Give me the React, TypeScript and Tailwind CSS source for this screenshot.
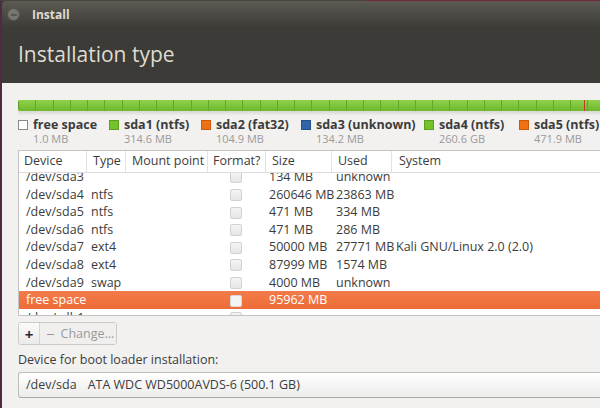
import React from "react";

const FONT = { fontFamily: '"Open Sans", "Noto Sans", sans-serif' };

type Row = { dev: string; type: string; size: string; used: string; sys: string; sel?: boolean };

const rows: Row[] = [
  { dev: "/dev/sda3", type: "", size: "134 MB", used: "unknown", sys: "" },
  { dev: "/dev/sda4", type: "ntfs", size: "260646 MB", used: "23863 MB", sys: "" },
  { dev: "/dev/sda5", type: "ntfs", size: "471 MB", used: "334 MB", sys: "" },
  { dev: "/dev/sda6", type: "ntfs", size: "471 MB", used: "286 MB", sys: "" },
  { dev: "/dev/sda7", type: "ext4", size: "50000 MB", used: "27771 MB", sys: "Kali GNU/Linux 2.0 (2.0)" },
  { dev: "/dev/sda8", type: "ext4", size: "87999 MB", used: "1574 MB", sys: "" },
  { dev: "/dev/sda9", type: "swap", size: "4000 MB", used: "unknown", sys: "" },
  { dev: "free space", type: "", size: "95962 MB", used: "", sys: "", sel: true },
  { dev: "/dev/sdb1", type: "", size: "", used: "", sys: "" },
];

const legend = [
  { name: "free space", size: "1.0 MB", sq: "bg-white border border-[#8a8a8a]", w: "w-[91px]" },
  { name: "sda1 (ntfs)", size: "314.6 MB", sq: "bg-[#73c42a] border border-[#5e9e22]", w: "w-[92px]" },
  { name: "sda2 (fat32)", size: "104.9 MB", sq: "bg-[#f07014] border border-[#c85a0c]", w: "w-[100px]" },
  { name: "sda3 (unknown)", size: "134.2 MB", sq: "bg-[#2f65a8] border border-[#24508a]", w: "w-[123px]" },
  { name: "sda4 (ntfs)", size: "260.6 GB", sq: "bg-[#73c42a] border border-[#5e9e22]", w: "w-[95px]" },
  { name: "sda5 (ntfs)", size: "471.9 MB", sq: "bg-[#f07014] border border-[#c85a0c]", w: "w-[90px]" },
];

const COLS = "grid grid-cols-[68px_39px_82px_58px_66px_60px_1fr]";

function Checkbox({ sel }: { sel?: boolean }) {
  return (
    <div
      className={
        "w-[12px] h-[12px] rounded-[2px] border " +
        (sel ? "border-[#d8d8d8] bg-[#f4f4f4]" : "border-[#d2d2d2] bg-gradient-to-b from-[#f4f4f4] to-[#e6e6e6]")
      }
    />
  );
}

export default function App() {
  const segs = Array.from({ length: 34 });
  return (
    <div className="w-[600px] h-[408px] overflow-hidden flex flex-col bg-[#3c3b37]" style={FONT}>
      <div className="h-[1px] flex shrink-0">
        <div className="w-[366px] bg-[#46453f]" />
        <div className="flex-1 bg-[#6e2a38]" />
      </div>
      <div className="flex flex-1 min-h-0">
        <div className="w-[2px] bg-[#4c2d40] shrink-0" />
        <div className="flex-1 flex flex-col min-w-0">
          {/* title bar */}
          <div className="h-[27px] shrink-0 flex items-center bg-gradient-to-b from-[#5c5a53] to-[#3c3b37] rounded-tl-[4px]">
            <div className="ml-[5px] w-[13px] h-[13px] rounded-full bg-[#77756f] border border-[#55534e] flex items-center justify-center">
              <div className="w-[6px] h-[2px] bg-[#5a5853]" />
            </div>
            <span className="ml-[12px] text-[12px] font-bold text-[#dfdbd2] leading-none">Install</span>
          </div>
          {/* header */}
          <div className="h-[55px] shrink-0 bg-[#3c3b37] flex items-start pl-[16px] pt-[12px]">
            <span className="text-[21px] text-[#dfdbd2] leading-[28px]">Installation type</span>
          </div>
          {/* content */}
          <div className="flex-1 bg-[#f2f1f0] pl-[16px] pt-[17px] flex flex-col">
            {/* bar */}
            <div className="relative h-[11px] flex rounded-l-[2px] overflow-hidden bg-gradient-to-b from-[#8fd24c] to-[#6db72a] border-l border-[#5c9c22]">
              {segs.map((_, i) => (
                <div key={i} className="w-[17.25px] shrink-0 h-full border-r border-[#62a828]" />
              ))}
              <div className="absolute left-[565px] top-0 h-full w-[1px] bg-[#c0392b]" />
            </div>
            <div className="h-[5px] bg-gradient-to-b from-[#d9d8d4] to-[#f2f1f0]" />
            {/* legend */}
            <div className="mt-[2px] flex">
              {legend.map((l) => (
                <div key={l.name} className={"flex shrink-0 " + l.w}>
                  <div className={"w-[10px] h-[10px] mt-[2px] shrink-0 " + l.sq} />
                  <div className="ml-[5px] flex flex-col">
                    <span className="text-[12.5px] font-bold text-[#3c3c3c] leading-[14px] whitespace-nowrap">{l.name}</span>
                    <span className="text-[11px] text-[#9a9a9a] leading-[14px] whitespace-nowrap">{l.size}</span>
                  </div>
                </div>
              ))}
            </div>
            {/* table */}
            <div className="mt-[4px] h-[166px] shrink-0 border border-r-0 border-[#c4c4c4] bg-white flex flex-col text-[12.5px] text-[#3c3c3c]">
              <div className={COLS + " h-[22px] shrink-0 border-b border-[#dcdcdc] items-stretch"}>
                <div className="pl-[5px] flex items-center border-r border-[#e2e2e2]">Device</div>
                <div className="pl-[6px] flex items-center border-r border-[#e2e2e2]">Type</div>
                <div className="pl-[6px] flex items-center border-r border-[#e2e2e2]">Mount point</div>
                <div className="pl-[5px] flex items-center border-r border-[#e2e2e2]">Format?</div>
                <div className="pl-[6px] flex items-center border-r border-[#e2e2e2]">Size</div>
                <div className="pl-[6px] flex items-center border-r border-[#e2e2e2]">Used</div>
                <div className="pl-[7px] flex items-center">System</div>
              </div>
              <div className="flex-1 overflow-hidden">
                <div className="-mt-[5px]">
                  {rows.map((r) => (
                    <div
                      key={r.dev}
                      className={
                        COLS +
                        " h-[17.6px] items-center whitespace-nowrap " +
                        (r.sel ? "bg-gradient-to-b from-[#f27b4a] to-[#ee6c37] text-white" : "")
                      }
                    >
                      <div className="pl-[7px]">{r.dev}</div>
                      <div className="pl-[4px]">{r.type}</div>
                      <div />
                      <div className="pl-[22px] flex items-center">
                        <Checkbox sel={r.sel} />
                      </div>
                      <div className="pl-[3px]">{r.size}</div>
                      <div className="pl-[4px]">{r.used}</div>
                      <div className="pl-[4px]">{r.sys}</div>
                    </div>
                  ))}
                </div>
              </div>
            </div>
            {/* buttons */}
            <div className="mt-[6px] w-[99px] h-[23px] flex rounded-[3px] border border-[#cbcbc8] overflow-hidden text-[12.5px] leading-[16px]">
              <div className="w-[21px] flex items-center justify-center bg-gradient-to-b from-[#fbfbfb] to-[#eaeaea] border-r border-[#d6d6d3] text-[#2a2a2a] font-bold text-[15px]">
                +
              </div>
              <div className="flex-1 flex items-center bg-[#f0efee] text-[#9a9a9a]">
                <span className="ml-[6px] text-[15px] leading-[16px]">−</span>
                <span className="ml-[6px]">Change...</span>
              </div>
            </div>
            <div className="mt-[7px] text-[12.5px] text-[#3c3c3c] leading-[16px]">Device for boot loader installation:</div>
            <div className="mt-[4px] h-[26px] shrink-0 rounded-l-[3px] border border-r-0 border-[#bdbdba] border-b-[#a8a8a5] bg-gradient-to-b from-[#ffffff] to-[#ececeb] flex items-center pl-[7px] text-[12.5px] text-[#3c3c3c] whitespace-nowrap">
              <span>/dev/sda</span>
              <span className="ml-[11px]">ATA WDC WD5000AVDS-6 (500.1 GB)</span>
            </div>
          </div>
        </div>
      </div>
    </div>
  );
}
